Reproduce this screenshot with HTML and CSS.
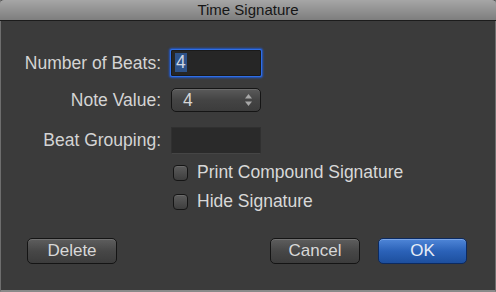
FILE: index.html
```html
<!DOCTYPE html>
<html>
<head>
<meta charset="utf-8">
<link rel="stylesheet" href="styles.css">
</head>
<body>
<div class="window">
  <div class="titlebar">Time Signature</div>
  <div class="content">
    <div class="form">
      <div class="label r1">Number of Beats:</div>
      <div class="field focused r1"><span class="sel">4</span></div>
      <div class="label r2">Note Value:</div>
      <div class="popup r2"><span class="pv">4</span>
        <svg class="arrows" width="9" height="14" viewBox="0 0 9 14"><path d="M4.5 1 L8 5.5 L1 5.5 Z" fill="#a8a8a8"/><path d="M4.5 13 L8 8.5 L1 8.5 Z" fill="#a8a8a8"/></svg>
      </div>
      <div class="label r3">Beat Grouping:</div>
      <div class="field plain r3"></div>
    </div>
    <div class="checks">
      <label class="check"><span class="box"></span><span>Print Compound Signature</span></label>
      <label class="check"><span class="box"></span><span>Hide Signature</span></label>
    </div>
    <div class="buttons">
      <div class="btn delete">Delete</div>
      <div class="right">
        <div class="btn">Cancel</div>
        <div class="btn ok">OK</div>
      </div>
    </div>
  </div>
</div>
</body>
</html>
```

FILE: styles.css
```css
html, body {
  margin: 0;
  padding: 0;
  background: #3b3b3b;
}
body {
  font-family: "Liberation Sans", Arial, sans-serif;
  width: 496px;
  height: 292px;
  overflow: hidden;
}
.window {
  width: 496px;
  height: 292px;
  box-sizing: border-box;
  background: #3b3b3b;
  border-left: 1px solid #6e6e6e;
  border-right: 1px solid #6e6e6e;
  border-bottom: 2px solid #8a8a8a;
  display: flex;
  flex-direction: column;
}
.titlebar {
  height: 20px;
  margin: 0 -1px;
  border-bottom: 1px solid #1c1c1c;
  background: linear-gradient(#a6a6a6, #7e7e7e);
  color: #161616;
  font-size: 15px;
  line-height: 20px;
  text-align: center;
  border-radius: 4px 4px 0 0;
}
.content {
  display: flex;
  flex-direction: column;
}
.form {
  display: grid;
  grid-template-columns: 160px 90px;
  column-gap: 10px;
  grid-template-rows: 26px 24px 27px;
  row-gap: 12px;
  margin-top: 29px;
  align-items: center;
}
.form .r3 { margin-top: 5px; }
.label {
  text-align: right;
  color: #d4d4d4;
  font-size: 17.5px;
  white-space: nowrap;
}
.field {
  height: 100%;
  box-sizing: border-box;
  background: #262626;
}
.field.focused {
  border: 1px solid #1a1a1a;
  box-shadow: 0 0 0 1px #2f6ee6, 0 0 2px 2px #2357c4;
  border-radius: 1px;
  padding: 2px 3px;
}
.sel {
  display: inline-block;
  background: #2d5289;
  color: #cfd6e2;
  font-size: 17.5px;
  line-height: 19px;
  padding: 0 1px;
}
.field.plain {
  border: 1px solid #303030;
  border-bottom-color: #454545;
  background: #2a2a2a;
}
.popup {
  height: 100%;
  box-sizing: border-box;
  border: 1px solid #151515;
  border-radius: 5px;
  background: linear-gradient(#5a5a5a, #444444 50%, #3c3c3c);
  box-shadow: inset 0 1px 0 #6a6a6a;
  display: flex;
  align-items: center;
  justify-content: space-between;
  padding: 0 7px 0 11px;
  color: #d6d6d6;
  font-size: 17.5px;
}
.arrows { display: block; }
.checks {
  display: flex;
  flex-direction: column;
  gap: 12px;
  margin-top: 13px;
  padding-left: 171px;
}
.check {
  display: flex;
  align-items: center;
  gap: 9px;
  height: 17px;
  color: #d8d8d8;
  font-size: 17.5px;
}
.box {
  width: 15px;
  height: 16px;
  box-sizing: border-box;
  border: 1px solid #151515;
  border-radius: 4px;
  background: linear-gradient(#5c5c5c, #3e3e3e);
  box-shadow: inset 0 1px 0 #6a6a6a;
  margin-left: 1px;
}
.buttons {
  display: flex;
  justify-content: space-between;
  margin-top: 28px;
  padding: 0 28px 0 26px;
}
.right {
  display: flex;
  gap: 18px;
}
.btn {
  width: 90px;
  height: 26px;
  box-sizing: border-box;
  border: 1px solid #141414;
  border-radius: 5px;
  background: linear-gradient(#5e5e5e, #474747 50%, #3c3c3c);
  box-shadow: inset 0 1px 0 #707070;
  color: #d8d8d8;
  font-size: 17px;
  line-height: 24px;
  text-align: center;
}
.btn.ok {
  width: 89px;
  border-color: #0c2a60;
  background: linear-gradient(#4f86d8, #2b62b8 50%, #1d4f9e);
  box-shadow: inset 0 1px 0 #7aa5e6;
  color: #e6ecf6;
}
```
